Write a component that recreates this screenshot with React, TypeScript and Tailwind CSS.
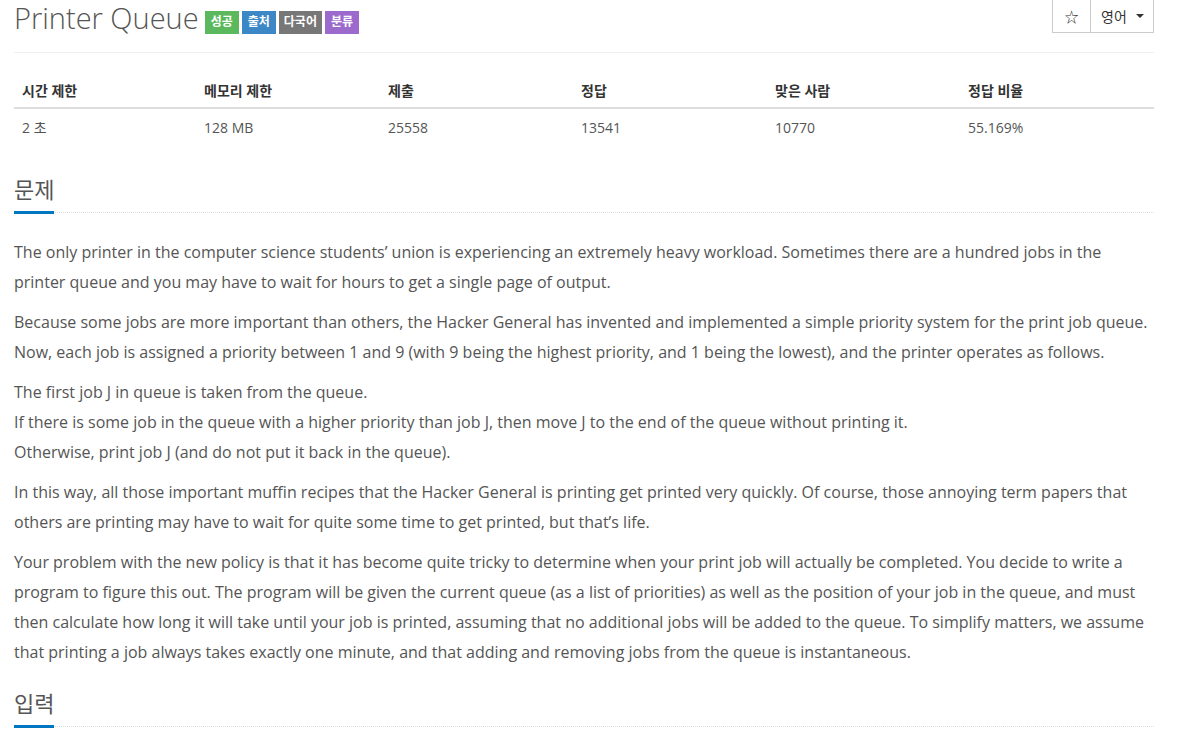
import React from "react";

const font = { fontFamily: '"Open Sans", "Noto Sans CJK KR", sans-serif' };

function Heading({ children }: { children: React.ReactNode }) {
  return (
    <div className="relative border-b border-dotted border-[#ddd] pb-[6px]">
      <h2 className="text-[22px] leading-[34px] text-[#555] font-normal">{children}</h2>
      <div className="absolute left-0 bottom-[-2px] h-[3px] w-[40px] bg-[#0076c0]" />
    </div>
  );
}

export default function App() {
  const headers = ["시간 제한", "메모리 제한", "제출", "정답", "맞은 사람", "정답 비율"];
  const values = ["2 초", "128 MB", "25558", "13541", "10770", "55.169%"];
  const widths = ["w-[182px]", "w-[184px]", "w-[193px]", "w-[194px]", "w-[193px]", "w-[194px]"];
  return (
    <div className="w-[1181px] h-[734px] overflow-hidden bg-white text-[#555]" style={font}>
      <div className="w-[1140px] ml-[14px]">
        <div className="flex items-start justify-between h-[53px] border-b border-[#eee]">
          <div className="flex items-center">
            <h1 className="text-[29px] leading-[36px] text-[#555] font-light">Printer Queue</h1>
            <div className="flex gap-[3px] ml-[6px] mt-[8px]">
              <span className="h-[23px] px-[6px] flex items-center text-[12px] font-bold text-white bg-[#5cb85c]">성공</span>
              <span className="h-[23px] px-[6px] flex items-center text-[12px] font-bold text-white bg-[#3c88c7]">출처</span>
              <span className="h-[23px] px-[5px] flex items-center text-[12px] font-bold text-white bg-[#777]">다국어</span>
              <span className="h-[23px] px-[6px] flex items-center text-[12px] font-bold text-white bg-[#9c69cd]">분류</span>
            </div>
          </div>
          <div className="flex h-[33px] border border-[#ccc] border-t-0 text-[14px] text-[#333]">
            <div className="w-[38px] flex items-center justify-center border-r border-[#ccc]">☆</div>
            <div className="w-[62px] flex items-center pl-[10px] gap-[9px]">
              <span>영어</span>
              <span className="w-0 h-0 border-l-[4px] border-r-[4px] border-t-[4px] border-l-transparent border-r-transparent border-t-[#333]" />
            </div>
          </div>
        </div>

        <div className="mt-[20px] text-[14px]">
          <div className="flex border-b-2 border-[#ddd] h-[36px] items-center font-bold text-[#333]">
            {headers.map((h, i) => (
              <div key={i} className={`${widths[i]} px-[8px]`}>{h}</div>
            ))}
          </div>
          <div className="flex h-[36px] items-center text-[#555]">
            {values.map((v, i) => (
              <div key={i} className={`${widths[i]} px-[8px]`}>{v}</div>
            ))}
          </div>
        </div>

        <div className="mt-[27px]">
          <Heading>문제</Heading>
        </div>

        <div className="mt-[24px] text-[16px] leading-[30px] text-[#555] space-y-[10px]">
          <p>The only printer in the computer science students’ union is experiencing an extremely heavy workload. Sometimes there are a hundred jobs in the printer queue and you may have to wait for hours to get a single page of output.</p>
          <p>Because some jobs are more important than others, the Hacker General has invented and implemented a simple priority system for the print job queue. Now, each job is assigned a priority between 1 and 9 (with 9 being the highest priority, and 1 being the lowest), and the printer operates as follows.</p>
          <p>
            The first job J in queue is taken from the queue.<br />
            If there is some job in the queue with a higher priority than job J, then move J to the end of the queue without printing it.<br />
            Otherwise, print job J (and do not put it back in the queue).
          </p>
          <p>In this way, all those important muffin recipes that the Hacker General is printing get printed very quickly. Of course, those annoying term papers that others are printing may have to wait for quite some time to get printed, but that’s life.</p>
          <p>Your problem with the new policy is that it has become quite tricky to determine when your print job will actually be completed. You decide to write a program to figure this out. The program will be given the current queue (as a list of priorities) as well as the position of your job in the queue, and must then calculate how long it will take until your job is printed, assuming that no additional jobs will be added to the queue. To simplify matters, we assume that printing a job always takes exactly one minute, and that adding and removing jobs from the queue is instantaneous.</p>
        </div>

        <div className="mt-[19px]">
          <Heading>입력</Heading>
        </div>
      </div>
    </div>
  );
}
